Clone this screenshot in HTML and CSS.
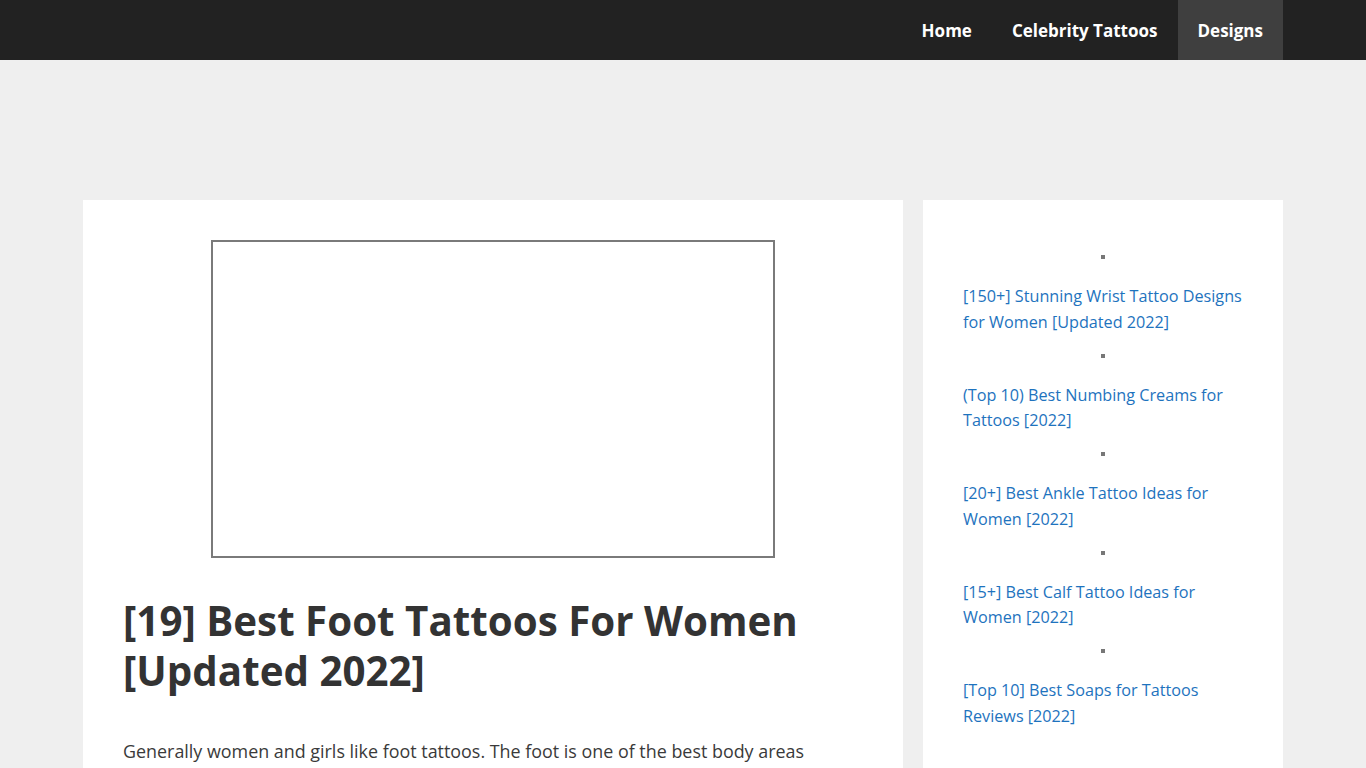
FILE: index.html
```html
<!DOCTYPE html>
<html lang="en">
<head>
<meta charset="utf-8">
<title>[19] Best Foot Tattoos For Women [Updated 2022]</title>
<link rel="stylesheet" href="styles.css">
</head>
<body>
<header class="site-header">
  <nav class="nav">
    <a class="nav-item" href="#">Home</a>
    <a class="nav-item" href="#">Celebrity Tattoos</a>
    <a class="nav-item nav-current" href="#">Designs</a>
  </nav>
</header>
<div class="site">
  <main class="content">
    <div class="figure"><div class="frame"></div></div>
    <h1 class="title">[19] Best Foot Tattoos For Women [Updated 2022]</h1>
    <p class="lead">Generally women and girls like foot tattoos. The foot is one of the best body areas because it looks very attractive when women wear sandals.</p>
  </main>
  <aside class="sidebar">
    <ul class="posts">
      <li class="post"><span class="dot"></span><a href="#">[150+] Stunning Wrist Tattoo Designs for Women [Updated 2022]</a></li>
      <li class="post"><span class="dot"></span><a href="#">(Top 10) Best Numbing Creams for Tattoos [2022]</a></li>
      <li class="post"><span class="dot"></span><a href="#">[20+] Best Ankle Tattoo Ideas for Women [2022]</a></li>
      <li class="post"><span class="dot"></span><a href="#">[15+] Best Calf Tattoo Ideas for Women [2022]</a></li>
      <li class="post"><span class="dot"></span><a href="#">[Top 10] Best Soaps for Tattoos Reviews [2022]</a></li>
    </ul>
  </aside>
</div>
</body>
</html>
```
FILE: styles.css
```css
* { box-sizing: border-box; }
html, body { margin: 0; padding: 0; }
body {
  background: #efefef;
  font-family: "Open Sans", "Noto Sans", sans-serif;
  color: #3a3a3a;
  overflow: hidden;
}
.site-header {
  background: #222222;
  height: 60px;
}
.nav {
  width: 1200px;
  margin: 0 auto;
  display: flex;
  justify-content: flex-end;
  height: 60px;
}
.nav-item {
  display: flex;
  align-items: center;
  padding: 0 20px;
  color: #ffffff;
  text-decoration: none;
  font-weight: 700;
  font-size: 17px;
}
.nav-current { background: #3f3f3f; }
.site {
  width: 1200px;
  margin: 140px auto 0;
  display: flex;
  gap: 20px;
  align-items: flex-start;
}
.content {
  width: 820px;
  background: #fff;
  padding: 40px;
  min-height: 600px;
}
.figure {
  display: flex;
  justify-content: center;
}
.frame {
  width: 564px;
  height: 318px;
  border: 2px solid #7a7a7a;
}
.title {
  margin: 38px 0 0;
  font-size: 40.3px;
  line-height: 50px;
  font-weight: 700;
  color: #333;
}
.lead {
  margin: 41px 0 0;
  font-size: 17.9px;
  line-height: 28px;
  color: #3a3a3a;
}
.sidebar {
  width: 360px;
  background: #fff;
  padding: 40px 40px 0;
  min-height: 600px;
}
.posts {
  list-style: none;
  margin: 0;
  padding: 0;
}
.post {
  display: flex;
  flex-direction: column;
  height: 98.5px;
  padding-top: 15px;
}
.dot {
  align-self: center;
  width: 4px;
  height: 4px;
  background: #777;
  margin-bottom: 25px;
}
.post a {
  color: #1e73be;
  text-decoration: none;
  font-size: 16.2px;
  line-height: 25.5px;
}
```
